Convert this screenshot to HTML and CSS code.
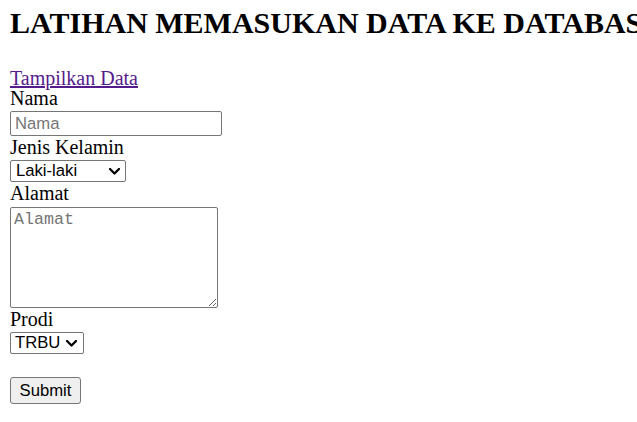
FILE: index.html
```html
<!DOCTYPE html>
<html lang="id">
<head>
<meta charset="utf-8">
<title>Latihan</title>
<link rel="stylesheet" href="styles.css">
</head>
<body>
<h1 class="title">LATIHAN MEMASUKAN DATA KE DATABASE</h1>
<form class="form">
  <div class="row"><a class="link" href="#">Tampilkan Data</a></div>
  <div class="row">Nama</div>
  <div class="ctl"><input class="field" type="text" placeholder="Nama"></div>
  <div class="row">Jenis Kelamin</div>
  <div class="ctl">
    <span class="pick-wrap">
      <select class="pick pick-jk"><option>Laki-laki</option><option>Perempuan</option></select>
      <svg class="chev chev-jk" width="11" height="7" viewBox="0 0 11 7" aria-hidden="true"><polyline points="1,1 5.5,5.5 10,1" fill="none" stroke="#000" stroke-width="2.3" stroke-linecap="round" stroke-linejoin="round"/></svg>
    </span>
  </div>
  <div class="row">Alamat</div>
  <div class="ctl"><textarea class="area" placeholder="Alamat"></textarea></div>
  <div class="row">Prodi</div>
  <div class="ctl">
    <span class="pick-wrap">
      <select class="pick pick-prodi"><option>TRBU</option></select>
      <svg class="chev chev-prodi" width="11" height="7" viewBox="0 0 11 7" aria-hidden="true"><polyline points="1,1 5.5,5.5 10,1" fill="none" stroke="#000" stroke-width="2.3" stroke-linecap="round" stroke-linejoin="round"/></svg>
    </span>
  </div>
  <div class="ctl ctl-submit"><button class="btn" type="submit">Submit</button></div>
</form>
</body>
</html>
```
FILE: styles.css
```css
html, body {
  margin: 0;
  padding: 0;
  background: #fff;
}
body {
  padding-left: 10px;
  font-family: "Liberation Serif", "Times New Roman", serif;
  font-size: 20px;
  color: #000;
  white-space: nowrap;
  overflow: hidden;
}
.title {
  margin: 6px 0 0 0;
  font-size: 30px;
  line-height: 34px;
  font-weight: bold;
}
.form {
  margin-top: 28px;
  display: flex;
  flex-direction: column;
  align-items: flex-start;
}
.row {
  line-height: 20px;
  height: 20px;
}
.link {
  color: #551a8b;
  text-decoration: underline;
}
.ctl {
  display: flex;
}
.field, .pick, .area, .btn {
  font-family: "Liberation Sans", Arial, sans-serif;
  font-size: 16.67px;
  color: #000;
  margin: 0;
}
.field {
  margin-top: 3px;
  width: 212px;
  height: 25px;
  box-sizing: border-box;
  border: 1px solid #767676;
  border-radius: 2px;
  padding: 1px 4px;
}
.field::placeholder, .area::placeholder {
  color: #757575;
}
.pick-wrap {
  position: relative;
  display: inline-flex;
  margin-top: 3px;
}
.pick {
  -webkit-appearance: none;
  appearance: none;
  height: 22px;
  box-sizing: border-box;
  border: 1px solid #767676;
  border-radius: 2px;
  background: #fff;
  padding: 0 18px 0 5px;
  line-height: 20px;
}
.pick-jk { width: 116px; }
.pick-prodi { width: 74px; padding-left: 4px; }
.chev {
  position: absolute;
  top: 8px;
  pointer-events: none;
}
.chev-jk { right: 6px; }
.chev-prodi { right: 7px; }
.area {
  margin-top: 4px;
  width: 208px;
  height: 101px;
  box-sizing: border-box;
  border: 1px solid #767676;
  border-radius: 2px;
  padding: 2px 3px;
  font-family: "Liberation Mono", "Courier New", monospace;
  font-size: 16.67px;
  line-height: 20px;
  resize: both;
}
.ctl-submit {
  margin-top: 23px;
}
.btn {
  width: 71px;
  height: 27px;
  box-sizing: border-box;
  border: 1px solid #767676;
  border-radius: 3px;
  background: #efefef;
  padding: 1px 6px;
}
.ctl + .row { margin-top: 1px; }
```
